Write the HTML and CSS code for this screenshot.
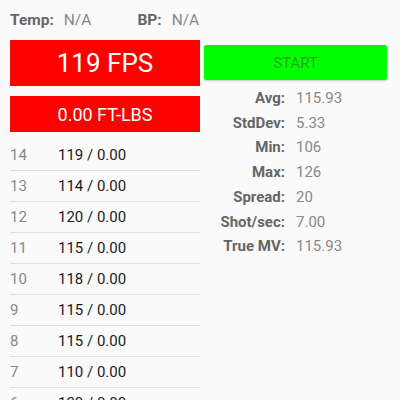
FILE: index.html
```html
<!DOCTYPE html>
<html lang="en">
<head>
  <meta charset="UTF-8" />
  <meta name="viewport" content="width=device-width, initial-scale=1.0"/>
  <title>Chrono</title>
  <link rel="stylesheet" href="styles.css">
</head>
<body>
  <div class="header">
    <span class="label">Temp:</span><span class="value">N/A</span>
    <span class="label bp">BP:</span><span class="value">N/A</span>
  </div>

  <div class="main">
    <div class="left">
      <div class="speed">119 FPS</div>
      <div class="energy">0.00 FT-LBS</div>
      <div class="shots">
        <div class="shot"><span class="num">14</span><span>119 / 0.00</span></div>
        <div class="shot"><span class="num">13</span><span>114 / 0.00</span></div>
        <div class="shot"><span class="num">12</span><span>120 / 0.00</span></div>
        <div class="shot"><span class="num">11</span><span>115 / 0.00</span></div>
        <div class="shot"><span class="num">10</span><span>118 / 0.00</span></div>
        <div class="shot"><span class="num">9</span><span>115 / 0.00</span></div>
        <div class="shot"><span class="num">8</span><span>115 / 0.00</span></div>
        <div class="shot"><span class="num">7</span><span>110 / 0.00</span></div>
        <div class="shot"><span class="num">6</span><span>120 / 0.00</span></div>
      </div>
    </div>

    <div class="right">
      <button class="start">START</button>
      <div class="stats">
        <span class="stat-label">Avg:</span><span class="stat-value">115.93</span>
        <span class="stat-label">StdDev:</span><span class="stat-value">5.33</span>
        <span class="stat-label">Min:</span><span class="stat-value">106</span>
        <span class="stat-label">Max:</span><span class="stat-value">126</span>
        <span class="stat-label">Spread:</span><span class="stat-value">20</span>
        <span class="stat-label">Shot/sec:</span><span class="stat-value">7.00</span>
        <span class="stat-label">True MV:</span><span class="stat-value">115.93</span>
      </div>
    </div>
  </div>
</body>
</html>
```

FILE: styles.css
```css
:root {
  --bg: #fafafa;
  --red: #ff0000;
  --green: #00ff00;
  --label: #666666;
  --muted: #888888;
  --line: #dddddd;
  --font: Roboto, 'Noto Sans', sans-serif;
}

body {
  margin: 0;
  background: var(--bg);
  font-family: var(--font);
  overflow: hidden;
}

.header {
  display: flex;
  align-items: center;
  height: 40px;
  padding-left: 10px;
  font-size: 15.5px;
}

.header .label {
  font-weight: bold;
  color: var(--label);
  margin-right: 10px;
}

.header .value {
  color: var(--muted);
}

.header .bp {
  margin-left: 46px;
}

.main {
  display: flex;
}

.left {
  width: 190px;
  margin-left: 10px;
}

.speed {
  height: 46px;
  background: var(--red);
  color: white;
  font-size: 26px;
  display: flex;
  align-items: center;
  justify-content: center;
}

.energy {
  height: 36px;
  margin-top: 10px;
  background: var(--red);
  color: white;
  font-size: 18px;
  display: flex;
  align-items: center;
  justify-content: center;
}

.shots {
  margin-top: 8px;
}

.shot {
  display: flex;
  align-items: center;
  height: 30px;
  border-bottom: 1px solid var(--line);
  font-size: 15px;
  color: #1a1a1a;
}

.shot .num {
  width: 48px;
  color: var(--muted);
}

.right {
  flex: 1;
  padding: 5px 13px 0 4px;
}

.start {
  display: block;
  width: 100%;
  height: 35px;
  border: none;
  border-radius: 2px;
  background: var(--green);
  color: #1faa1f;
  font-family: var(--font);
  font-size: 15px;
  box-shadow: 0 1px 2px rgba(0, 0, 0, 0.2);
}

.stats {
  display: grid;
  grid-template-columns: 81px auto;
  column-gap: 11px;
  margin-top: 6px;
  font-size: 15px;
  line-height: 24.7px;
}

.stat-label {
  text-align: right;
  font-weight: bold;
  color: var(--label);
}

.stat-value {
  color: var(--muted);
}
```
